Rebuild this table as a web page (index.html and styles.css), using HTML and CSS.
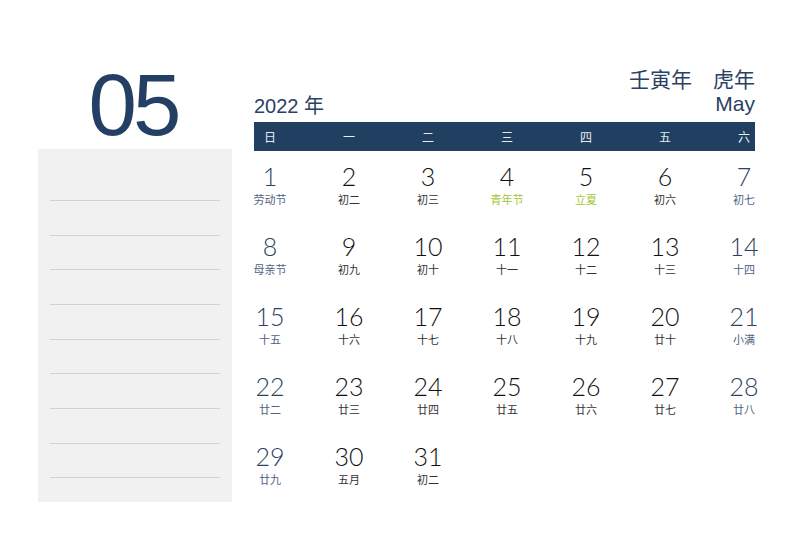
FILE: index.html
```html
<!DOCTYPE html>
<html lang="zh-CN">
<head>
<meta charset="utf-8">
<title>2022年5月</title>
<link rel="stylesheet" href="styles.css">
</head>
<body>
<div class="page">
  <div class="left">
    <div class="big-month">05</div>
    <div class="notes">
      <div class="line"></div><div class="line"></div><div class="line"></div>
      <div class="line"></div><div class="line"></div><div class="line"></div>
      <div class="line"></div><div class="line"></div><div class="line"></div>
    </div>
  </div>
  <div class="right">
    <div class="head">
      <div class="year">2022 年</div>
      <div class="ganzhi">
        <div>壬寅年　虎年</div>
        <div class="en">May</div>
      </div>
    </div>
    <div class="bar">
      <div class="cols">
        <span>日</span><span>一</span><span>二</span><span>三</span><span>四</span><span>五</span><span>六</span>
      </div>
    </div>
    <div class="days">
      <div class="d we"><div class="n">1</div><div class="l">劳动节</div></div>
      <div class="d"><div class="n">2</div><div class="l">初二</div></div>
      <div class="d"><div class="n">3</div><div class="l">初三</div></div>
      <div class="d"><div class="n">4</div><div class="l fest">青年节</div></div>
      <div class="d"><div class="n">5</div><div class="l fest">立夏</div></div>
      <div class="d"><div class="n">6</div><div class="l">初六</div></div>
      <div class="d we"><div class="n">7</div><div class="l">初七</div></div>

      <div class="d we"><div class="n">8</div><div class="l">母亲节</div></div>
      <div class="d"><div class="n">9</div><div class="l">初九</div></div>
      <div class="d"><div class="n">10</div><div class="l">初十</div></div>
      <div class="d"><div class="n">11</div><div class="l">十一</div></div>
      <div class="d"><div class="n">12</div><div class="l">十二</div></div>
      <div class="d"><div class="n">13</div><div class="l">十三</div></div>
      <div class="d we"><div class="n">14</div><div class="l">十四</div></div>

      <div class="d we"><div class="n">15</div><div class="l">十五</div></div>
      <div class="d"><div class="n">16</div><div class="l">十六</div></div>
      <div class="d"><div class="n">17</div><div class="l">十七</div></div>
      <div class="d"><div class="n">18</div><div class="l">十八</div></div>
      <div class="d"><div class="n">19</div><div class="l">十九</div></div>
      <div class="d"><div class="n">20</div><div class="l">廿十</div></div>
      <div class="d we"><div class="n">21</div><div class="l">小满</div></div>

      <div class="d we"><div class="n">22</div><div class="l">廿二</div></div>
      <div class="d"><div class="n">23</div><div class="l">廿三</div></div>
      <div class="d"><div class="n">24</div><div class="l">廿四</div></div>
      <div class="d"><div class="n">25</div><div class="l">廿五</div></div>
      <div class="d"><div class="n">26</div><div class="l">廿六</div></div>
      <div class="d"><div class="n">27</div><div class="l">廿七</div></div>
      <div class="d we"><div class="n">28</div><div class="l">廿八</div></div>

      <div class="d we"><div class="n">29</div><div class="l">廿九</div></div>
      <div class="d"><div class="n">30</div><div class="l">五月</div></div>
      <div class="d"><div class="n">31</div><div class="l">初二</div></div>
    </div>
  </div>
</div>
</body>
</html>
```
FILE: styles.css
```css
html, body {
  margin: 0;
  padding: 0;
  background: #ffffff;
}
body {
  width: 793px;
  height: 559px;
  overflow: hidden;
  font-family: "Liberation Sans", "Noto Sans CJK SC", sans-serif;
}
.page {
  display: flex;
  align-items: flex-start;
  padding-left: 38px;
}
.left {
  width: 194px;
  padding-top: 61px;
}
.big-month {
  font-family: "Liberation Sans", Arial, sans-serif;
  font-size: 87px;
  line-height: 87px;
  color: #233f63;
  text-align: center;
  letter-spacing: -4px;
  text-indent: -4px;
  margin-bottom: 1px;
}
.notes {
  background: #f1f1f1;
  height: 353px;
  box-sizing: border-box;
  padding: 51px 12px 0 12px;
}
.line {
  height: 34.67px;
  box-sizing: border-box;
  border-top: 1px solid #d2d2d2;
}
.right {
  width: 501px;
  margin-left: 22px;
  padding-top: 68px;
}
.head {
  display: flex;
  justify-content: space-between;
  align-items: flex-end;
  color: #2a4163;
}
.year {
  font-size: 20px;
  line-height: 24px;
  margin-bottom: -2px;
  font-family: "Liberation Sans", "Noto Sans CJK SC", sans-serif;
}
.ganzhi {
  text-align: right;
  font-size: 21px;
  line-height: 24px;
  font-family: "Liberation Sans", "Noto Sans CJK SC", sans-serif;
}
.bar {
  margin-top: 6px;
  height: 29px;
  background: #213f61;
}
.cols {
  display: grid;
  grid-template-columns: repeat(7, 79px);
  margin-left: -23.5px;
  width: 553px;
  color: #e6ebf1;
  font-size: 12px;
  line-height: 29px;
  text-align: center;
  font-family: "Noto Sans CJK SC", sans-serif;
}
.days {
  display: grid;
  grid-template-columns: repeat(7, 79px);
  grid-auto-rows: 70px;
  margin-left: -23.5px;
  width: 553px;
  margin-top: 11px;
}
.d {
  text-align: center;
}
.n {
  font-family: "Lato", "Open Sans", sans-serif;
  font-weight: 300;
  font-size: 25px;
  line-height: 28px;
  color: #111111;
}
.l {
  font-family: "Noto Sans CJK SC", sans-serif;
  font-size: 11px;
  line-height: 14px;
  margin-top: 2px;
  color: #333333;
}
.we .n {
  color: #2d4262;
}
.we .l {
  color: #4f6282;
}
.l.fest {
  color: #a3c637;
}
```
